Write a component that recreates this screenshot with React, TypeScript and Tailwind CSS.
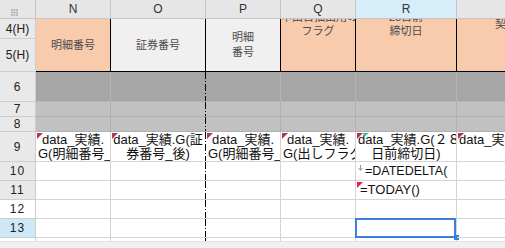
import type { ReactNode } from 'react'

const COLS = ['N', 'O', 'P', 'Q', 'R', 'S']

const Marker = ({ color = '#a8385c' }: { color?: string }) => (
  <svg
    className="absolute left-[1px] top-[1px]"
    width="6"
    height="6"
    viewBox="0 0 6 6"
  >
    <polygon points="0,0 6,0 0,6" fill={color} />
  </svg>
)

const PageBreak = () => (
  <div className="w-px shrink-0 self-stretch bg-[repeating-linear-gradient(to_bottom,#000_0_7px,transparent_7px_9px,#000_9px_10px,transparent_10px_12px)]" />
)

// one body cell; the O column carries the dashed page break on its right edge
const Cell = ({
  col,
  className = '',
  children,
}: {
  col: string
  className?: string
  children?: ReactNode
}) => (
  <div
    className={`relative flex min-w-0 border-b ${col === 'O' ? '' : 'border-r'} ${className}`}
  >
    <div className="relative min-w-0 flex-1 overflow-hidden">{children}</div>
    {col === 'O' && <PageBreak />}
  </div>
)

const RowHead = ({
  label,
  className = 'bg-[#e9e9e9]',
}: {
  label: string
  className?: string
}) => (
  <div
    className={`flex items-center justify-center border-r border-b border-[#cdcdcd] text-[12px] tracking-[1px] text-[#222] ${className}`}
  >
    {label}
  </div>
)

const wrapped: Record<string, string[]> = {
  N: ['data_実績.', 'G(明細番号_'],
  O: ['data_実績.G(証', '券番号_後)'],
  P: ['data_実績.', 'G(明細番号_'],
  Q: ['data_実績.', 'G(出しフラグ)'],
  R: ['data_実績.G(２８', '日前締切日)'],
  S: ['data_実績.G(契約番号)', ''],
}

const App = () => {
  return (
    <div className="h-[248px] w-[505px] overflow-hidden bg-white font-['Liberation_Sans','Noto_Sans_CJK_JP',sans-serif]">
      <div className="grid w-[587px] grid-cols-[36px_75px_95px_75px_75px_101px_130px] grid-rows-[19px_20px_33px_30px_15px_15px_30px_19px_19px_19px_19px_3px]">
        {/* column headers */}
        <div className="border-r border-b border-[#c6c6c6] bg-[#e6e6e6] pl-[11px] pt-[9px]">
          <svg width="7" height="7" viewBox="0 0 7 7">
            {[1, 3.5, 6].map((y) =>
              [1, 3.5, 6].map((x) => (
                <rect key={`${x}-${y}`} x={x - 0.8} y={y - 0.8} width="1.6" height="1.6" fill="#a3a3a3" />
              )),
            )}
          </svg>
        </div>
        {COLS.map((c) => (
          <div
            key={c}
            className={`flex items-center justify-center border-r border-b border-[#c6c6c6] text-[12px] text-[#333] ${
              c === 'R' ? 'bg-[#d5eefa]' : 'bg-[#e6e6e6]'
            }`}
          >
            {c}
          </div>
        ))}

        {/* rows 4-5 (merged headers) */}
        <div className="flex items-center justify-center border-r border-b border-[#cdcdcd] bg-[#e9e9e9] text-[12px] text-[#222]">
          4(H)
        </div>
        <div className="row-span-2 flex items-center justify-center border-r border-b border-black bg-[#f8cbad] text-[11px] text-[#4d4d4d]">
          明細番号
        </div>
        <div className="row-span-2 flex items-center justify-center border-r border-b border-black bg-[#f0f0f0] text-[11px] text-[#4d4d4d]">
          証券番号
        </div>
        <div className="row-span-2 flex flex-col items-center justify-center border-r border-b border-black bg-[#f0f0f0] text-[11px] leading-[15px] text-[#4d4d4d]">
          <div>明細</div>
          <div>番号</div>
        </div>
        <div className="row-span-2 overflow-hidden border-r border-b border-black bg-[#f8cbad] text-center text-[11px] leading-[14px] text-[#4d4d4d]">
          <div className="mt-[-9px] whitespace-nowrap">申出日抽出用の</div>
          <div>フラグ</div>
        </div>
        <div className="row-span-2 overflow-hidden border-r border-b border-black bg-[#f8cbad] text-center text-[11px] leading-[14px] text-[#4d4d4d]">
          <div className="mt-[-9px]">28日前</div>
          <div>締切日</div>
        </div>
        <div className="row-span-2 overflow-hidden border-r border-b border-black bg-[#f8cbad] text-[11px] leading-[14px] text-[#4d4d4d]">
          <div className="mt-[-2px] whitespace-nowrap pl-[38px]">契約番号</div>
        </div>
        <div className="flex items-center justify-center border-r border-b border-[#cdcdcd] bg-[#e9e9e9] text-[12px] text-[#222]">
          5(H)
        </div>

        {/* row 6 */}
        <RowHead label="6" />
        {COLS.map((c) => (
          <Cell key={c} col={c} className="border-[#b4b4b4] bg-[#a6a6a6]" />
        ))}

        {/* rows 7-8 */}
        <RowHead label="7" />
        {COLS.map((c) => (
          <Cell key={c} col={c} className="border-[#b0b0b0] bg-[#c1c1c1]" />
        ))}
        <RowHead label="8" />
        {COLS.map((c) => (
          <Cell key={c} col={c} className="border-[#b0b0b0] bg-[#c1c1c1]" />
        ))}

        {/* row 9 */}
        <RowHead label="9" />
        {COLS.map((c) => (
          <Cell key={c} col={c} className="border-[#d4d4d4]">
            <div className="px-[2px] pt-[1px] text-center text-[13px] leading-[14px] text-[#111]">
              {wrapped[c].map((line, i) => (
                <div key={i} className="h-[14px] whitespace-nowrap">
                  {line}
                </div>
              ))}
            </div>
            <Marker />
            {c === 'R' && (
              <svg className="absolute left-[7px] top-[1px]" width="6" height="5" viewBox="0 0 6 5">
                <polygon points="0,0 6,0 1,4" fill="#2ec4a4" />
              </svg>
            )}
          </Cell>
        ))}

        {/* row 10 */}
        <RowHead label="10" />
        {COLS.map((c) => (
          <Cell key={c} col={c} className="border-[#d4d4d4]">
            {c === 'R' && (
              <>
                <svg className="absolute left-[2px] top-[3px]" width="5" height="6" viewBox="0 0 5 6">
                  <path d="M2.5 0V5M0.5 3L2.5 5.5L4.5 3" stroke="#9a9a9a" strokeWidth="1" fill="none" />
                </svg>
                <div className="flex h-full items-center whitespace-nowrap pl-[9px] text-[12.5px] text-[#111]">
                  =DATEDELTA(
                </div>
              </>
            )}
          </Cell>
        ))}

        {/* row 11 */}
        <RowHead label="11" />
        {COLS.map((c) => (
          <Cell key={c} col={c} className="border-[#d4d4d4]">
            {c === 'R' && (
              <>
                <Marker color="#e8194d" />
                <div className="flex h-full items-center whitespace-nowrap pl-[4px] text-[13px] text-[#111]">
                  =TODAY()
                </div>
              </>
            )}
          </Cell>
        ))}

        {/* row 12 */}
        <RowHead label="12" className="bg-white" />
        {COLS.map((c) => (
          <Cell key={c} col={c} className="border-[#d4d4d4]" />
        ))}

        {/* row 13, R13 selected */}
        <RowHead label="13" className="bg-[#cfe8f7]" />
        {COLS.map((c) => (
          <div
            key={c}
            className={`relative flex border-b border-[#d4d4d4] ${c === 'O' ? '' : 'border-r'}`}
          >
            <div className="flex-1" />
            {c === 'O' && <PageBreak />}
            {c === 'R' && (
              <>
                <div className="absolute -left-[1px] -top-[1px] right-0 bottom-[-1px] border-2 border-[#3b7fdc]" />
                <div className="absolute -right-[3px] -bottom-[3px] h-[5px] w-[5px] bg-[#3b7fdc]" />
              </>
            )}
          </div>
        ))}

        {/* row 14, cut off */}
        <div className="border-r border-[#cdcdcd] bg-white" />
        {COLS.map((c) => (
          <div key={c} className={`flex ${c === 'O' ? '' : 'border-r border-[#d4d4d4]'}`}>
            <div className="flex-1" />
            {c === 'O' && <PageBreak />}
          </div>
        ))}
      </div>
      <div className="h-[7px] border-t border-[#e2e2e2] bg-[#f0f0f0]" />
    </div>
  )
}

export default App
